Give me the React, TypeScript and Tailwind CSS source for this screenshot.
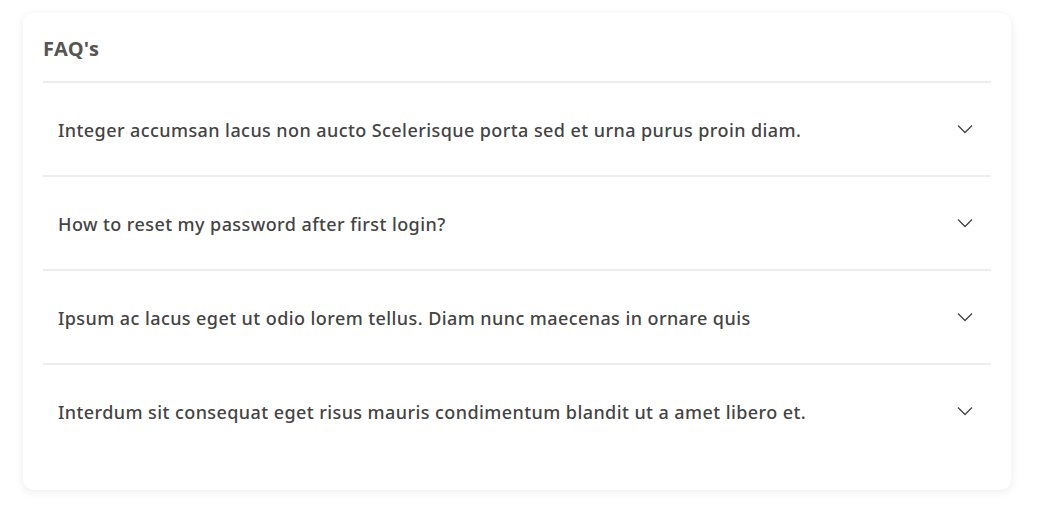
import React, { useState } from 'react';

const faqs = [
    'Integer accumsan lacus non aucto Scelerisque porta sed et urna purus proin diam.',
    'How to reset my password after first login?',
    'Ipsum ac lacus eget ut odio lorem tellus. Diam nunc maecenas in ornare quis',
    'Interdum sit consequat eget risus mauris condimentum blandit ut a amet libero et.',
];

const Chevron = () => (
    <svg width="16" height="10" viewBox="0 0 16 10" fill="none">
        <path d="M1 1.5L8 8.5L15 1.5" stroke="#444" strokeWidth="1.3" />
    </svg>
);

export default function App() {
    const [open, setOpen] = useState<number | null>(null);

    return (
        <div className="min-h-screen bg-white pl-[23px] pt-[13px]" style={{ fontFamily: '"Open Sans", "Noto Sans", sans-serif' }}>
            <div className="w-[988px] h-[477px] bg-white rounded-[10px] shadow-[0_2px_10px_rgba(0,0,0,0.08)] px-[20px] pt-[23px]">
                <h2 className="text-[20px] leading-[26px] font-bold text-[#555] pb-[19px] border-b-2 border-[#ededed]">FAQ's</h2>
                {faqs.map((q, i) => (
                    <div key={i} className={i < faqs.length - 1 ? 'border-b-2 border-[#ededed]' : ''}>
                        <button
                            onClick={() => setOpen(open === i ? null : i)}
                            className="w-full h-[92px] flex items-center justify-between pl-[15px] pr-[18px] text-left"
                        >
                            <span className="pt-[2px] text-[18px] font-medium text-[#444] tracking-[0.42px]" style={{ fontFamily: '"Noto Sans", "Open Sans", sans-serif' }}>{q}</span>
                            <Chevron />
                        </button>
                    </div>
                ))}
            </div>
        </div>
    );
}
